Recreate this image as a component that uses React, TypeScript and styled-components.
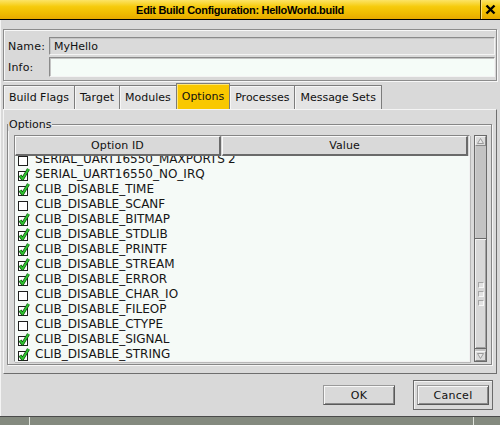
import React from 'react';
import styled, {createGlobalStyle} from 'styled-components';

const GlobalStyle = createGlobalStyle`
    html, body {
        margin: 0;
        padding: 0;
        width: 500px;
        height: 425px;
        overflow: hidden;
        background-color: #d9d9d9;
        font-family: "DejaVu Sans", sans-serif;
        font-size: 11px;
        color: #111;
    }
`

const Window = styled.div`
    width: 500px;
    height: 417px;
    box-sizing: border-box;
    display: flex;
    flex-direction: column;
    background-color: #d9d9d9;
    border-bottom: solid 1px #4a4a4a;
    box-shadow: inset 1px 0 0 #f4f4f4;
`
const TitleBar = styled.div`
    height: 20px;
    box-sizing: border-box;
    display: flex;
    background: linear-gradient(to bottom, #fce466 0%, #f6cb0c 35%, #efbb00 70%, #e6a900 100%);
    border-bottom: solid 1px #000000;
`
const Title = styled.div`
    flex: 1;
    display: flex;
    align-items: center;
    justify-content: center;
    font-family: "Liberation Sans", Arial, sans-serif;
    font-weight: 700;
    font-size: 11px;
    letter-spacing: -0.3px;
    color: #000;
`
const CloseBtn = styled.div`
    width: 19px;
    display: flex;
    align-items: center;
    justify-content: center;
    border-left: solid 1px #4a3a00;
    box-shadow: inset 1px 0 0 #fde27a;
`
const Content = styled.div`
    padding: 9px 3px 0 3px;
    display: flex;
    flex-direction: column;
`
const NameGroup = styled.div`
    height: 52px;
    box-sizing: border-box;
    border: solid 1px #8c8c8c;
    box-shadow: inset 1px 1px 0 #f7f7f7, 1px 1px 0 #f7f7f7;
    padding: 7px 1px 2px 4px;
    display: grid;
    grid-template-columns: 41px 1fr;
    grid-template-rows: 18px 20px;
    row-gap: 2px;
    align-items: center;
`
const Label = styled.div`
    font-size: 11px;
    letter-spacing: 0.2px;
`
const Field = styled.div<{ editable: boolean; }>`
    height: 100%;
    box-sizing: border-box;
    display: flex;
    align-items: center;
    padding-left: 4px;
    background-color: ${props => props.editable ? '#f5fcf8' : '#dadada'};
    border-top: solid 1px #8a8a8a;
    border-left: solid 1px #8a8a8a;
    border-bottom: solid 1px #f4f4f4;
    border-right: solid 1px #f4f4f4;
    box-shadow: inset 1px 1px 0 #c4c4c4;
`
const TabRow = styled.div`
    margin-top: 2px;
    height: 26px;
    display: flex;
    align-items: flex-end;
`
const Tab = styled.div<{ active: boolean; }>`
    height: ${props => props.active ? '26px' : '24px'};
    box-sizing: border-box;
    padding: 0 5px;
    margin-right: -1px;
    display: flex;
    align-items: center;
    font-size: 11px;
    background-color: ${props => props.active ? '#f9c800' : '#e4e4e4'};
    border: solid 1px #7c7c7c;
    border-bottom: none;
    box-shadow: inset 1px 1px 0 ${props => props.active ? '#fde67a' : '#f6f6f6'};
`
const Panel = styled.div`
    height: 265px;
    box-sizing: border-box;
    border-top: solid 1px #f4f4f4;
    border-left: solid 1px #f4f4f4;
    border-right: solid 1px #6e6e6e;
    border-bottom: solid 1px #6e6e6e;
    padding: 8px 4px 0 3px;
    background-color: #dadada;
`
const Group = styled.fieldset`
    margin: 0;
    padding: 0;
    border: solid 1px #868686;
    box-shadow: inset 1px 1px 0 #f6f6f6, 1px 1px 0 #f6f6f6;
`
const Legend = styled.legend`
    padding: 0 1px;
    margin-left: 0;
    line-height: 13px;
    font-size: 11px;
    background-color: #dadada;
`
const ListFrame = styled.div`
    height: 227px;
    margin: 4px 4px 2px 6px;
    display: flex;
    gap: 4px;
`
const TableBox = styled.div`
    flex: 1;
    display: flex;
    flex-direction: column;
    background-color: #f5faf7;
    border-top: solid 1px #858585;
    border-left: solid 1px #858585;
    border-bottom: solid 1px #f2f2f2;
    border-right: solid 1px #f2f2f2;
    box-shadow: 1px 1px 0 #b8b8b8;
`
const HeaderRow = styled.div`
    height: 20px;
    display: flex;
    gap: 1px;
    background-color: #d9d9d9;
`
const HeaderCell = styled.div<{ w: number; }>`
    width: ${props => props.w}px;
    box-sizing: border-box;
    display: flex;
    align-items: center;
    justify-content: center;
    background-color: #d9d9d9;
    border-top: solid 1px #fafafa;
    border-left: solid 1px #fafafa;
    border-right: solid 2px #6a6a6a;
    border-bottom: solid 2px #6a6a6a;
    font-size: 11px;
    letter-spacing: 0.1px;
`
const RowList = styled.div`
    flex: 1;
    overflow: hidden;
`
const RowScroll = styled.div`
    margin-top: -5px;
`
const Row = styled.div`
    height: 15px;
    display: grid;
    grid-template-columns: 210px 1fr;
    align-items: center;
    font-size: 12px;
    color: #151515;
`
const NameCell = styled.div`
    display: flex;
    align-items: center;
    gap: 5px;
    padding-left: 3px;
    white-space: nowrap;
`
const ValueCell = styled.div`
    padding-left: 3px;
`
const ScrollBar = styled.div`
    width: 13px;
    box-sizing: border-box;
    display: flex;
    flex-direction: column;
    border: solid 1px #6a6a6a;
    background-color: #c3c3c3;
    box-shadow: inset 1px 0 0 #d2d2d2;
`
const ArrowBtn = styled.div`
    height: 10px;
    box-sizing: border-box;
    display: flex;
    align-items: center;
    justify-content: center;
    background-color: #dcdcdc;
    border: solid 1px #f4f4f4;
    border-right-color: #8a8a8a;
    border-bottom-color: #8a8a8a;
`
const Trough = styled.div`
    flex: 1;
    display: flex;
    flex-direction: column;
    justify-content: flex-end;
    padding-bottom: 2px;
`
const Thumb = styled.div`
    height: 111px;
    box-sizing: border-box;
    display: flex;
    flex-direction: column;
    align-items: center;
    justify-content: center;
    gap: 3px;
    background-color: #d8d8d8;
    border-top: solid 1px #6a6a6a;
    border-bottom: solid 1px #6a6a6a;
    box-shadow: inset 1px 1px 0 #f2f2f2, inset -1px -1px 0 #a0a0a0;
`
const Grip = styled.div`
    width: 4px;
    height: 4px;
    border: solid 1px #a6a6a6;
    border-right-color: #f8f8f8;
    border-bottom-color: #f8f8f8;
    background-color: #e2e2e2;
`
const Footer = styled.div`
    flex: 1;
    display: flex;
    justify-content: flex-end;
    align-items: center;
    gap: 18px;
    padding-right: 7px;
`
const Button = styled.button`
    width: 72px;
    height: 20px;
    box-sizing: border-box;
    padding: 0;
    font-family: "DejaVu Sans", sans-serif;
    font-size: 11px;
    letter-spacing: 0.3px;
    color: #111;
    background-color: #d9d9d9;
    border: solid 1px #5a5a5a;
    border-top-color: #9a9a9a;
    border-left-color: #9a9a9a;
    box-shadow: inset 1px 1px 0 #f8f8f8, inset -1px -1px 0 #8a8a8a;
`
const DefaultFrame = styled.div`
    padding: 4px 3px;
    border: solid 1px #6a6a6a;
    box-shadow: inset 1px 1px 0 #f4f4f4;
`
const TaskBar = styled.div`
    height: 8px;
    display: flex;
    background-color: #848a7f;
`
const TaskSlot = styled.div<{ w: number; }>`
    width: ${props => props.w}px;
    border-right: solid 1px #e0e4dc;
`

const options = [
    {id: 'SERIAL_UART16550_MAXPORTS', checked: false, value: '2'},
    {id: 'SERIAL_UART16550_NO_IRQ', checked: true, value: ''},
    {id: 'CLIB_DISABLE_TIME', checked: true, value: ''},
    {id: 'CLIB_DISABLE_SCANF', checked: false, value: ''},
    {id: 'CLIB_DISABLE_BITMAP', checked: true, value: ''},
    {id: 'CLIB_DISABLE_STDLIB', checked: true, value: ''},
    {id: 'CLIB_DISABLE_PRINTF', checked: true, value: ''},
    {id: 'CLIB_DISABLE_STREAM', checked: true, value: ''},
    {id: 'CLIB_DISABLE_ERROR', checked: true, value: ''},
    {id: 'CLIB_DISABLE_CHAR_IO', checked: false, value: ''},
    {id: 'CLIB_DISABLE_FILEOP', checked: true, value: ''},
    {id: 'CLIB_DISABLE_CTYPE', checked: false, value: ''},
    {id: 'CLIB_DISABLE_SIGNAL', checked: true, value: ''},
    {id: 'CLIB_DISABLE_STRING', checked: true, value: ''},
];

const tabs = ['Build Flags', 'Target', 'Modules', 'Options', 'Processes', 'Message Sets'];

function CheckIcon({checked} : {checked : boolean}){
    return(
        <svg width="12" height="14" viewBox="0 0 12 14">
            <rect x="0.5" y="4.5" width="9" height="9" fill="#ffffff" stroke="#1e1e1e" />
            {checked && (
                <>
                    <path d="M2 8.5 L4.5 12 L10.5 2" fill="none" stroke="#0c4a0c" strokeWidth="3.2" strokeLinejoin="round" />
                    <path d="M2 8.5 L4.5 12 L10.5 2" fill="none" stroke="#2fc42f" strokeWidth="1.8" strokeLinejoin="round" />
                </>
            )}
        </svg>
    );
}

function App(){
    return(
        <>
            <GlobalStyle />
            <Window>
                <TitleBar>
                    <Title>Edit Build Configuration: HelloWorld.build</Title>
                    <CloseBtn>
                        <svg width="11" height="11" viewBox="0 0 11 11">
                            <path d="M1.5 1.5 L9.5 9.5 M9.5 1.5 L1.5 9.5" stroke="#000" strokeWidth="2.4" />
                        </svg>
                    </CloseBtn>
                </TitleBar>
                <Content>
                    <NameGroup>
                        <Label>Name:</Label>
                        <Field editable={false}>MyHello</Field>
                        <Label>Info:</Label>
                        <Field editable={true}></Field>
                    </NameGroup>
                    <TabRow>
                        {tabs.map(t => (
                            <Tab key={t} active={t === 'Options'}>{t}</Tab>
                        ))}
                    </TabRow>
                    <Panel>
                        <Group>
                            <Legend>Options</Legend>
                            <ListFrame>
                                <TableBox>
                                    <HeaderRow>
                                        <HeaderCell w={206}>Option ID</HeaderCell>
                                        <HeaderCell w={246}>Value</HeaderCell>
                                    </HeaderRow>
                                    <RowList>
                                        <RowScroll>
                                            {options.map(o => (
                                                <Row key={o.id}>
                                                    <NameCell>
                                                        <CheckIcon checked={o.checked} />
                                                        {o.id}
                                                    </NameCell>
                                                    <ValueCell>{o.value}</ValueCell>
                                                </Row>
                                            ))}
                                        </RowScroll>
                                    </RowList>
                                </TableBox>
                                <ScrollBar>
                                    <ArrowBtn>
                                        <svg width="7" height="6" viewBox="0 0 7 6">
                                            <path d="M3.5 0.5 L6.5 5.5 L0.5 5.5 Z" fill="#e8e8e8" stroke="#9a9a9a" />
                                        </svg>
                                    </ArrowBtn>
                                    <Trough>
                                        <Thumb>
                                            <Grip />
                                            <Grip />
                                            <Grip />
                                        </Thumb>
                                    </Trough>
                                    <ArrowBtn>
                                        <svg width="7" height="6" viewBox="0 0 7 6">
                                            <path d="M0.5 0.5 L6.5 0.5 L3.5 5.5 Z" fill="#e8e8e8" stroke="#9a9a9a" />
                                        </svg>
                                    </ArrowBtn>
                                </ScrollBar>
                            </ListFrame>
                        </Group>
                    </Panel>
                </Content>
                <Footer>
                    <Button>OK</Button>
                    <DefaultFrame>
                        <Button>Cancel</Button>
                    </DefaultFrame>
                </Footer>
            </Window>
            <TaskBar>
                <TaskSlot w={29} />
                <TaskSlot w={443} />
            </TaskBar>
        </>
    );
}

export default App;
